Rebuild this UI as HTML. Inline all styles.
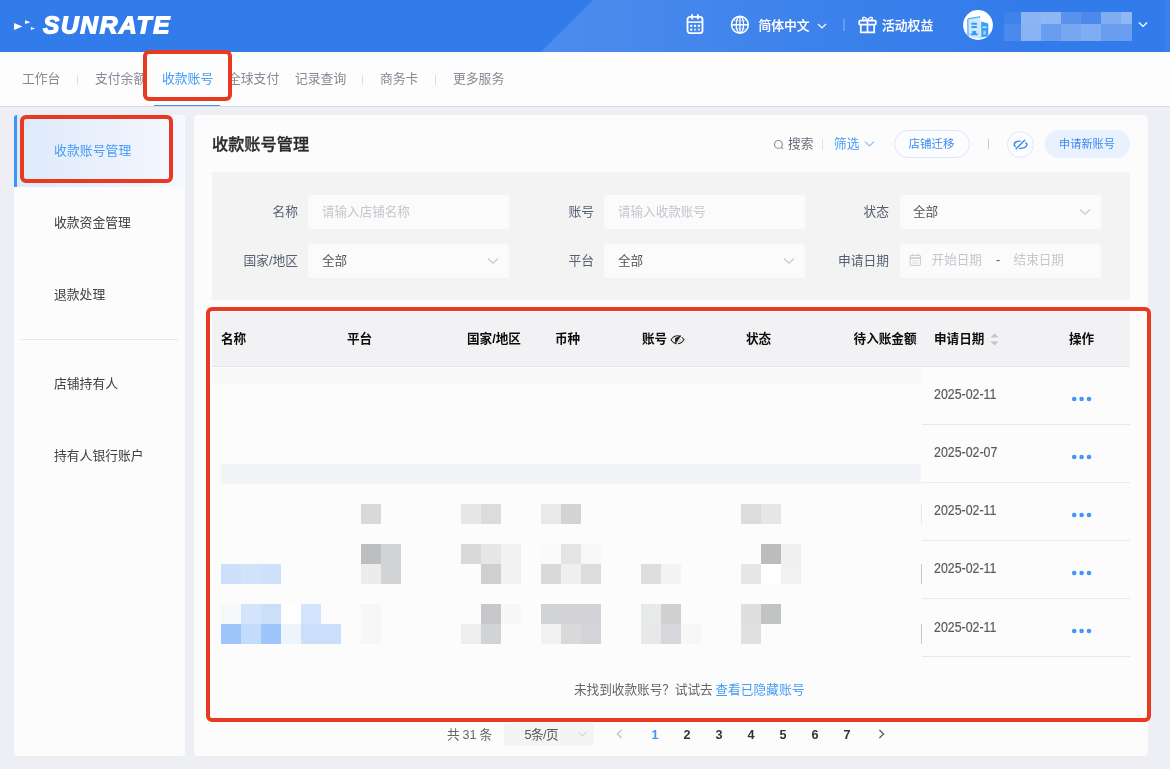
<!DOCTYPE html>
<html lang="zh-CN">
<head>
<meta charset="utf-8">
<title>SUNRATE - 收款账号管理</title>
<style>
*{box-sizing:border-box;margin:0;padding:0}
html,body{width:1170px;height:769px;overflow:hidden}
body{background:#edeff5;font-family:"Liberation Sans","Noto Sans CJK SC",sans-serif;font-size:12.6px;color:#333;position:relative}
#root{position:absolute;left:0;top:0;width:1170px;height:769px;will-change:transform}
.abs{position:absolute}
.t{position:absolute;white-space:nowrap;line-height:20px;height:20px}
/* header */
#hdr{position:absolute;left:0;top:0;width:1170px;height:52px;background:#327bea;overflow:hidden}
#hdr .band{position:absolute;left:0;top:0;width:1170px;height:52px;background:linear-gradient(90deg,rgba(255,255,255,.13) 545px,rgba(255,255,255,.06) 790px,rgba(255,255,255,0) 1030px);clip-path:polygon(593px 0,1170px 0,1170px 52px,541px 52px)}
#hdr .tri{position:absolute;left:1165px;top:0;width:5px;height:52px;background:rgba(255,255,255,.04)}
#logo{position:absolute;left:42.8px;top:9.2px;font:italic bold 22px/30px "Liberation Sans",sans-serif;color:#fff;letter-spacing:1.55px;-webkit-text-stroke:1.2px #fff;transform:scale(1.11,1.1) rotate(0.03deg);transform-origin:0 0}
.hw{color:#fff;font-weight:500;font-size:12.8px;-webkit-text-stroke:.15px #fff;margin-top:.5px}
/* nav */
#nav{position:absolute;left:0;top:52px;width:1170px;height:55px;background:#fdfdfe;border-bottom:1px solid #d9dbe2}
#nav .t{top:17px;color:#858a94;font-size:12.8px}
#nav .sep{position:absolute;top:23px;width:1px;height:10px;background:#dcdde1}
.red{position:absolute;border:4px solid #e83a20;border-radius:6px}
/* cards */
#side{position:absolute;left:14px;top:115px;width:171px;height:641px;background:#fcfcfd;border-radius:3px}
#side .t{left:40px;color:#404040;font-size:12.8px}
#main{position:absolute;left:194px;top:115px;width:954px;height:641px;background:#fcfcfd;border-radius:4px}
#filt{position:absolute;left:212px;top:172px;width:918px;height:128px;background:#f3f3f4}
.inp{position:absolute;height:34px;width:201px;background:#fbfbfb;border-radius:3px}
.lab{position:absolute;white-space:nowrap;line-height:20px;color:#566070;font-size:12.75px;text-align:right;width:90px}
.ph{position:absolute;white-space:nowrap;line-height:20px;color:#c3c6cd;font-size:12.55px}
.val{position:absolute;white-space:nowrap;line-height:20px;color:#555;font-size:12.6px}
#th{position:absolute;left:212px;top:312px;width:918px;height:55px;background:#f2f2f4;border-bottom:1px solid #e2e5ee}
.h{position:absolute;top:328.9px;white-space:nowrap;line-height:20px;font-weight:700;color:#0d0d0d;font-size:12.6px}
.rowline{position:absolute;left:922px;width:208px;height:1px;background:#e6e8f3}
.date{position:absolute;left:934px;white-space:nowrap;line-height:20px;color:#5a5a5a;font-size:13.8px;transform:scaleX(.897);transform-origin:0 50%;-webkit-text-stroke:.2px #5a5a5a}
.dots{position:absolute;left:1072px;width:20px;height:5px}
.dots i{position:absolute;top:0;width:4.6px;height:4.6px;border-radius:50%;background:#4096ff}
.pg{position:absolute;top:724.5px;white-space:nowrap;line-height:20px;font-size:12.6px;color:#333;width:20px;text-align:center;font-weight:700}
#mosaic{position:absolute;left:212px;top:367px;width:710px;height:297px;background:#fcfcfc;overflow:hidden}
#mosaic i{position:absolute;width:20px;height:20px}
</style>
</head>
<body>
<div id="root">
<!-- HEADER -->
<div id="hdr">
  <div class="band"></div>
  <div class="tri"></div>
  <svg class="abs" style="left:13px;top:20px" width="24" height="12" viewBox="0 0 24 12"><path d="M1 3.100L9.400 6.600L1 10ZM12.100 .200L17.400 2.200L12.100 4ZM17.900 6.900L22.100 8.400L17.900 10Z" fill="#fff"/></svg>
  <div id="logo">SUNRATE</div>

  <!-- calendar -->
  <svg class="abs" style="left:686px;top:14px" width="18" height="22" viewBox="0 0 18 22" fill="none" stroke="#fff" stroke-width="1.8"><rect x="1.5" y="2.8" width="15" height="16.3" rx="2.6"/><path d="M1.5 8.1H16.5" stroke-width="1.5"/><path d="M6.1 1v3.6M11.9 1v3.6" stroke-width="2" stroke-linecap="round"/><g fill="#fff" stroke="none"><rect x="4.2" y="10.8" width="2.1" height="2.1"/><rect x="8" y="10.8" width="2.1" height="2.1"/><rect x="11.8" y="10.8" width="2.1" height="2.1"/><rect x="4.2" y="14.6" width="2.1" height="2.1"/><rect x="8" y="14.6" width="2.1" height="2.1" opacity=".7"/><rect x="11.8" y="14.6" width="2.1" height="2.1" opacity=".7"/></g></svg>
  <!-- globe -->
  <svg class="abs" style="left:730px;top:15px" width="20" height="20" viewBox="0 0 20 20" fill="none" stroke="#fff" stroke-width="1.6"><circle cx="9.9" cy="9.8" r="8.4"/><ellipse cx="9.9" cy="9.8" rx="3.7" ry="8.4" stroke-width="1.3"/><path d="M1.5 9.8H18.3" stroke-width="1.5"/><path d="M9.9 1.4V18.2" stroke-width="1.3"/><path d="M3.2 5.200C7 6.200 12.800 6.200 16.600 5.200M3.200 14.400C7 13.400 12.800 13.400 16.600 14.400" stroke-width=".7" opacity=".7"/></svg>
  <div class="t hw" style="left:758.4px;top:15px">简体中文</div>
  <svg class="abs" style="left:817px;top:21.6px" width="10" height="8" viewBox="0 0 10 8" fill="none" stroke="#fff" stroke-width="1.2"><path d="M1 2l4 4 4-4"/></svg>
  <div class="abs" style="left:842.5px;top:19px;width:2px;height:12px;background:rgba(255,255,255,.2)"></div>
  <!-- gift -->
  <svg class="abs" style="left:858px;top:15px" width="19" height="19" viewBox="0 0 19 19" fill="none" stroke="#fff" stroke-width="1.75"><rect x="1.2" y="5.6" width="16.6" height="4" rx=".8"/><path d="M2.8 9.6V17.4H16.2V9.6"/><path d="M9.5 5.6V17.4"/><path d="M9.5 5.4C8 2.2 5 1.4 4.6 3.4 4.3 5 6.6 5.5 9.5 5.4ZM9.5 5.4C11 2.2 14 1.4 14.4 3.4 14.7 5 12.4 5.5 9.5 5.4Z" stroke-width="1.3"/></svg>
  <div class="t hw" style="left:882px;top:15px">活动权益</div>
  <!-- avatar -->
  <svg class="abs" style="left:962.6px;top:9.6px" width="30" height="30" viewBox="0 0 30 30"><defs><clipPath id="avc"><circle cx="15" cy="15" r="14.9"/></clipPath></defs><circle cx="15" cy="15" r="14.9" fill="#fff"/><g clip-path="url(#avc)"><path d="M4.800 8.800L17.200 6.700 18.300 29 5 26.400Z" fill="#cfe7fc"/><path d="M5 26.200L4.800 9.700Q4.800 8.900 5.600 8.700L17.200 6.700" fill="none" stroke="#2f9bf5" stroke-width="1"/><path d="M8.400 12.700h5.500v2h-5.500zM8.400 16h5.500v2.100h-5.500zM9.200 21h3.900v2.600h1.600v1.700h-7.100v-1.700h1.600z" fill="#2f9bf5"/><path d="M18.100 11.500L25.300 13.400V26.200L18.300 27.400Z" fill="#3aa2f7"/><path d="M19.600 16.600h3.900v1.500h-3.900z" fill="#cfe7fc"/><path d="M20.400 21h2.300v3.600h-2.300z" fill="#a9d6fb"/></g></svg>
  <!-- name mosaic -->
  <div class="abs" style="left:1004px;top:12px;width:128px;height:29px;overflow:hidden">
    <i class="abs" style="left:0;top:0;width:17px;height:12px;background:#3f82ea"></i>
    <i class="abs" style="left:17px;top:0;width:20px;height:12px;background:#8bb4f3"></i>
    <i class="abs" style="left:37px;top:0;width:20px;height:12px;background:#8fb7f4"></i>
    <i class="abs" style="left:57px;top:0;width:20px;height:12px;background:#5a93ee"></i>
    <i class="abs" style="left:77px;top:0;width:20px;height:12px;background:#4b89ec"></i>
    <i class="abs" style="left:97px;top:0;width:20px;height:12px;background:#80adf2"></i>
    <i class="abs" style="left:117px;top:0;width:11px;height:12px;background:#90b8f4"></i>
    <i class="abs" style="left:0;top:12px;width:17px;height:17px;background:#4c89ec"></i>
    <i class="abs" style="left:17px;top:12px;width:20px;height:17px;background:#8ab3f3"></i>
    <i class="abs" style="left:37px;top:12px;width:20px;height:17px;background:#699df0"></i>
    <i class="abs" style="left:57px;top:12px;width:20px;height:17px;background:#78a7f1"></i>
    <i class="abs" style="left:77px;top:12px;width:20px;height:17px;background:#80adf2"></i>
    <i class="abs" style="left:97px;top:12px;width:20px;height:17px;background:#699eef"></i>
    <i class="abs" style="left:117px;top:12px;width:11px;height:17px;background:#6a9ef0"></i>
  </div>
  <svg class="abs" style="left:1138px;top:21px" width="10" height="8" viewBox="0 0 10 8" fill="none" stroke="#fff" stroke-width="1.4"><path d="M1 1.6l4 3.8 4-3.8"/></svg>
</div>

<!-- NAV -->
<div id="nav">
  <div class="t" style="left:22px">工作台</div>
  <div class="sep" style="left:77px"></div>
  <div class="t" style="left:95px">支付余额</div>
  <div class="t" style="left:162px;color:#459df6">收款账号</div>
  <div class="t" style="left:228px">全球支付</div>
  <div class="t" style="left:295px">记录查询</div>
  <div class="sep" style="left:362px"></div>
  <div class="t" style="left:380px">商务卡</div>
  <div class="sep" style="left:435px"></div>
  <div class="t" style="left:453px">更多服务</div>
  <div class="abs" style="left:154px;top:53px;width:66px;height:1px;background:#3c96f8"></div>
</div>

<!-- SIDEBAR -->
<div id="side">
  <div class="abs" style="left:0;top:0;width:171px;height:72px;background:linear-gradient(90deg,#dde9fb 0,#eaf1fc 55%,#f6f9fe 100%);border-radius:3px 3px 0 0"></div>
  <div class="abs" style="left:0;top:0;width:3px;height:72px;background:#3c96f8;border-radius:3px 0 0 0"></div>
  <div class="t" style="top:25.7px;color:#459df6;letter-spacing:.1px">收款账号管理</div>
  <div class="t" style="top:97.7px">收款资金管理</div>
  <div class="t" style="top:169.7px">退款处理</div>
  <div class="abs" style="left:7px;top:224px;width:157px;height:1px;background:#e4e7f2"></div>
  <div class="t" style="top:259.1px">店铺持有人</div>
  <div class="t" style="top:331.1px">持有人银行账户</div>
</div>
<!-- MAIN -->
<div id="main"></div>
<div class="t" style="left:212px;top:132px;font-size:16.2px;font-weight:500;color:#2a2a2a;-webkit-text-stroke:.3px #2a2a2a;line-height:24px;height:24px">收款账号管理</div>
<!-- toolbar -->
<svg class="abs" style="left:773px;top:139px" width="12" height="12" viewBox="0 0 12 12" fill="none" stroke="#8a8a8a" stroke-width="1.1"><circle cx="5.4" cy="5.4" r="3.9"/><path d="M8.3 8.3l1.7 1.5"/></svg>
<div class="t" style="left:788px;top:134px;color:#696f79;font-size:12.7px">搜索</div>
<div class="abs" style="left:822px;top:139px;width:1px;height:11px;background:#e0e2e8"></div>
<div class="t" style="left:834px;top:134px;color:#4a9af5;font-size:12.7px">筛选</div>
<svg class="abs" style="left:864px;top:140px" width="11" height="8" viewBox="0 0 11 8" fill="none" stroke="#4a9af5" stroke-width="1"><path d="M1 1.500l4.500 4.500 4.500-4.500"/></svg>
<div class="abs" style="left:894px;top:130px;width:75.5px;height:28px;border:1px solid #dbe7fd;border-radius:14px;background:#fcfdff"></div>
<div class="t" style="left:908.6px;top:134px;color:#3d8af0;font-size:11.5px">店铺迁移</div>
<div class="abs" style="left:988px;top:139px;width:1px;height:10px;background:#bccdee"></div>
<div class="abs" style="left:1007px;top:131px;width:27px;height:27px;border:1px solid #dde8fd;border-radius:50%;background:#fcfdff"></div>
<svg class="abs" style="left:1012px;top:137px" width="17" height="15" viewBox="0 0 17 15" fill="none" stroke="#3d8af0" stroke-width="1.45" stroke-linecap="round"><path d="M8.2 4.1C5 4.2 2.3 5.6 2.2 7.6 2.2 8.3 2.6 9 3.4 9.5"/><path d="M13.8 5.9C14.6 6.5 15 7.1 15 7.8 14.9 9.8 11.5 11.4 7.8 11.4"/><path d="M4.2 11.7L12.7 3.2"/></svg>
<div class="abs" style="left:1045px;top:130px;width:85px;height:28px;border-radius:14px;background:#e9f0fe"></div>
<div class="t" style="left:1059px;top:134px;color:#3d8af0;font-size:11.2px">申请新账号</div>
<div id="filt"></div>
<div class="inp" style="left:308px;top:195px"></div>
<div class="inp" style="left:604px;top:195px"></div>
<div class="inp" style="left:900px;top:195px"></div>
<div class="inp" style="left:308px;top:244px"></div>
<div class="inp" style="left:604px;top:244px"></div>
<div class="inp" style="left:900px;top:244px"></div>
<div class="lab" style="left:208px;top:201.6px">名称</div>
<div class="lab" style="left:504px;top:201.6px">账号</div>
<div class="lab" style="left:799px;top:201.6px">状态</div>
<div class="lab" style="left:208px;top:250.6px">国家/地区</div>
<div class="lab" style="left:504px;top:250.6px">平台</div>
<div class="lab" style="left:799px;top:250.6px">申请日期</div>
<div class="ph" style="left:322px;top:201.6px">请输入店铺名称</div>
<div class="ph" style="left:618px;top:201.6px">请输入收款账号</div>
<div class="val" style="left:913px;top:201.6px">全部</div>
<div class="val" style="left:322px;top:250.6px">全部</div>
<div class="val" style="left:618px;top:250.6px">全部</div>
<svg class="abs chev" style="left:1079px;top:208px" width="12" height="8" viewBox="0 0 12 8" fill="none" stroke="#c2c5cc" stroke-width="1.1"><path d="M1 1.5l5 4.8 5-4.8"/></svg>
<svg class="abs chev" style="left:487px;top:257px" width="12" height="8" viewBox="0 0 12 8" fill="none" stroke="#c2c5cc" stroke-width="1.1"><path d="M1 1.5l5 4.8 5-4.8"/></svg>
<svg class="abs chev" style="left:783px;top:257px" width="12" height="8" viewBox="0 0 12 8" fill="none" stroke="#c2c5cc" stroke-width="1.1"><path d="M1 1.5l5 4.8 5-4.8"/></svg>
<svg class="abs" style="left:908.5px;top:252.6px" width="13" height="14" viewBox="0 0 13 14" fill="none" stroke="#c6c9d0" stroke-width="1"><rect x="1.2" y="2.4" width="10.2" height="10" rx=".6"/><path d="M1.2 5h10.2" stroke-width="1.5"/><path d="M3.7 .8v2M8.9 .8v2"/><path d="M3.2 7.8h6.2M3.2 10h6.2" stroke-width=".8" opacity=".8"/></svg>
<div class="ph" style="left:931.6px;top:249.6px">开始日期</div>
<div class="val" style="left:996px;top:249.6px;color:#555">-</div>
<div class="ph" style="left:1013.6px;top:249.6px">结束日期</div>
<div id="th"></div>
<div class="h" style="left:221px">名称</div>
<div class="h" style="left:347px">平台</div>
<div class="h" style="left:467px">国家/地区</div>
<div class="h" style="left:555px">币种</div>
<div class="h" style="left:642px">账号</div>
<svg class="abs" style="left:670px;top:334px" width="15" height="12" viewBox="0 0 15 12" fill="none" stroke="#222" stroke-width="1.1"><path d="M1 5.8C3 2.8 5.2 1.8 7.5 1.8S12 2.8 14 5.8C12 8.8 9.8 9.8 7.5 9.8S3 8.8 1 5.8Z"/><path d="M9.4 4.6a2 2 0 0 1-1 3.2" stroke-width=".9"/><path d="M11.4 1L4.9 4.3 5.5 10.6Z" fill="#222" stroke="none"/><path d="M12.3 1.2L6.5 10.8" stroke="#f2f2f4" stroke-width="1.2"/></svg>
<div class="h" style="left:746px">状态</div>
<div class="h" style="left:816.5px;width:100px;text-align:right">待入账金额</div>
<div class="h" style="left:934px">申请日期</div>
<svg class="abs" style="left:989.6px;top:332.6px" width="9" height="14" viewBox="0 0 9 14"><path d="M4.500 .600L8.500 4.600H.500z" fill="#c0c4cf"/><path d="M4.500 12.600L8.500 8.600H.500z" fill="#c0c4cf"/></svg>
<div class="h" style="left:1069px">操作</div>
<div id="mosaic">
<i style="left:0;top:1px;width:709px;height:16px;background:#f8f8f9"></i>
<i style="left:9px;top:97px;width:700px;height:20px;background:#f2f4f8"></i>
<i style="left:149px;top:137px;background:#d9d9d9"></i><i style="left:249px;top:137px;background:#e6e8e7"></i><i style="left:269px;top:137px;background:#dcdcdc"></i><i style="left:329px;top:137px;background:#e8eae9"></i><i style="left:349px;top:137px;background:#d3d3d3"></i><i style="left:529px;top:137px;background:#dcdcdc"></i><i style="left:549px;top:137px;background:#e6e6e6"></i>
<i style="left:149px;top:177px;background:#bdbec0"></i><i style="left:169px;top:177px;background:#d2d3d5"></i><i style="left:249px;top:177px;background:#d9d9d9"></i><i style="left:269px;top:177px;background:#e6e6e6"></i><i style="left:289px;top:177px;background:#f2f2f2"></i><i style="left:329px;top:177px;background:#fafafa"></i><i style="left:349px;top:177px;background:#e4e4e4"></i><i style="left:369px;top:177px;background:#f8f8f8"></i><i style="left:549px;top:177px;background:#bcbcbe"></i><i style="left:569px;top:177px;background:#f0f0f0"></i>
<i style="left:9px;top:197px;background:#cde0fa"></i><i style="left:29px;top:197px;background:#d1e3fb"></i><i style="left:49px;top:197px;background:#cfe1fa"></i><i style="left:149px;top:197px;background:#ececec"></i><i style="left:169px;top:197px;background:#d2d3d5"></i><i style="left:269px;top:197px;background:#cfcfcf"></i><i style="left:289px;top:197px;background:#f2f2f2"></i><i style="left:329px;top:197px;background:#d9dadc"></i><i style="left:349px;top:197px;background:#eef0ef"></i><i style="left:369px;top:197px;background:#dcdcdc"></i><i style="left:429px;top:197px;background:#dedede"></i><i style="left:449px;top:197px;background:#f3f3f3"></i><i style="left:529px;top:197px;background:#e6e6e6"></i><i style="left:549px;top:197px;background:#ffffff"></i><i style="left:569px;top:197px;background:#f1f1f1"></i>
<i style="left:9px;top:237px;background:#f6f8fb"></i><i style="left:29px;top:237px;background:#d4e5fb"></i><i style="left:49px;top:237px;background:#cbdff9"></i><i style="left:69px;top:237px;background:#ffffff"></i><i style="left:89px;top:237px;background:#d3e5fc"></i><i style="left:149px;top:237px;background:#f7f7f7"></i><i style="left:269px;top:237px;background:#c8c8ca"></i><i style="left:289px;top:237px;background:#f7f7f7"></i><i style="left:329px;top:237px;background:#d2d3d5"></i><i style="left:349px;top:237px;background:#d3d3d5"></i><i style="left:369px;top:237px;background:#d2d3d6"></i><i style="left:429px;top:237px;background:#e8eae9"></i><i style="left:449px;top:237px;background:#d0d0d0"></i><i style="left:529px;top:237px;background:#dfdfdf"></i><i style="left:549px;top:237px;background:#c2c3c5"></i>
<i style="left:9px;top:257px;background:#9fc6fa"></i><i style="left:29px;top:257px;background:#c4dcfb"></i><i style="left:49px;top:257px;background:#9fc6fa"></i><i style="left:69px;top:257px;background:#eef4fc"></i><i style="left:89px;top:257px;background:#cbdffa"></i><i style="left:109px;top:257px;background:#cbdffa"></i><i style="left:149px;top:257px;background:#f7f7f7"></i><i style="left:249px;top:257px;background:#eeeeee"></i><i style="left:269px;top:257px;background:#d2d3d6"></i><i style="left:329px;top:257px;background:#f2f2f2"></i><i style="left:349px;top:257px;background:#d9d9d9"></i><i style="left:369px;top:257px;background:#d3d4d7"></i><i style="left:429px;top:257px;background:#e8e8e8"></i><i style="left:449px;top:257px;background:#d6d7da"></i><i style="left:469px;top:257px;background:#f7f7f7"></i><i style="left:529px;top:257px;background:#e0e0e0"></i>
<i style="left:709px;top:137px;width:1px;background:#e6e6e6"></i><i style="left:709px;top:197px;width:1px;background:#c8c8c8"></i><i style="left:709px;top:257px;width:1px;background:#c8c8c8"></i>
</div>
<div class="date" style="top:385.1px">2025-02-11</div>
<svg class="abs" style="left:1071px;top:396.0px" width="22" height="6" viewBox="0 0 22 6"><circle cx="3.2" cy="3" r="2.3" fill="#4096ff"/><circle cx="10.6" cy="3" r="2.3" fill="#4096ff"/><circle cx="18" cy="3" r="2.3" fill="#4096ff"/></svg>
<div class="rowline" style="top:424px"></div>
<div class="date" style="top:442.9px">2025-02-07</div>
<svg class="abs" style="left:1071px;top:454.0px" width="22" height="6" viewBox="0 0 22 6"><circle cx="3.2" cy="3" r="2.3" fill="#4096ff"/><circle cx="10.6" cy="3" r="2.3" fill="#4096ff"/><circle cx="18" cy="3" r="2.3" fill="#4096ff"/></svg>
<div class="rowline" style="top:482px"></div>
<div class="date" style="top:501.1px">2025-02-11</div>
<svg class="abs" style="left:1071px;top:512.0px" width="22" height="6" viewBox="0 0 22 6"><circle cx="3.2" cy="3" r="2.3" fill="#4096ff"/><circle cx="10.6" cy="3" r="2.3" fill="#4096ff"/><circle cx="18" cy="3" r="2.3" fill="#4096ff"/></svg>
<div class="rowline" style="top:540px"></div>
<div class="date" style="top:559.0px">2025-02-11</div>
<svg class="abs" style="left:1071px;top:570.0px" width="22" height="6" viewBox="0 0 22 6"><circle cx="3.2" cy="3" r="2.3" fill="#4096ff"/><circle cx="10.6" cy="3" r="2.3" fill="#4096ff"/><circle cx="18" cy="3" r="2.3" fill="#4096ff"/></svg>
<div class="rowline" style="top:598px"></div>
<div class="date" style="top:618.1px">2025-02-11</div>
<svg class="abs" style="left:1071px;top:628.0px" width="22" height="6" viewBox="0 0 22 6"><circle cx="3.2" cy="3" r="2.3" fill="#4096ff"/><circle cx="10.6" cy="3" r="2.3" fill="#4096ff"/><circle cx="18" cy="3" r="2.3" fill="#4096ff"/></svg>
<div class="rowline" style="top:656px"></div>
<div class="t" style="left:574px;top:680.2px;color:#666;font-size:12.68px"><span style="letter-spacing:-.06px">未找到收款账号？试试去</span> <span style="color:#459cf5;margin-left:-1.1px;letter-spacing:.12px">查看已隐藏账号</span></div>
<div class="t" style="left:447px;top:724.5px;color:#666;font-size:12.6px;word-spacing:-.5px">共 31 条</div>
<div class="abs" style="left:504px;top:723px;width:90px;height:23px;background:#f3f4f5;border-radius:3px"></div>
<div class="t" style="left:524.4px;top:724.5px;color:#555;font-size:12.6px;letter-spacing:-.5px">5条/页</div>
<svg class="abs" style="left:578px;top:731px" width="9" height="7" viewBox="0 0 9 7" fill="none" stroke="#c2c5cc" stroke-width="1"><path d="M.8 1.2l3.7 3.8 3.7-3.8"/></svg>
<svg class="abs" style="left:616.2px;top:729px" width="7" height="10" viewBox="0 0 7 10" fill="none" stroke="#bfc2c8" stroke-width="1.4"><path d="M5.6 1L1.4 5l4.2 4"/></svg>
<div class="pg" style="left:645px;color:#3f97f7">1</div>
<div class="pg" style="left:677px">2</div>
<div class="pg" style="left:709px">3</div>
<div class="pg" style="left:741px">4</div>
<div class="pg" style="left:773px">5</div>
<div class="pg" style="left:805px">6</div>
<div class="pg" style="left:837px">7</div>
<svg class="abs" style="left:878.2px;top:729px" width="7" height="10" viewBox="0 0 7 10" fill="none" stroke="#555" stroke-width="1.2"><path d="M1.4 1l4.2 4-4.2 4"/></svg>

<div class="red" style="left:143px;top:50px;width:89px;height:51px"></div>
<div class="red" style="left:20px;top:115px;width:153px;height:68px"></div>
<div class="red" style="left:206px;top:307px;width:945px;height:415px"></div>
</div>
</body>
</html>
